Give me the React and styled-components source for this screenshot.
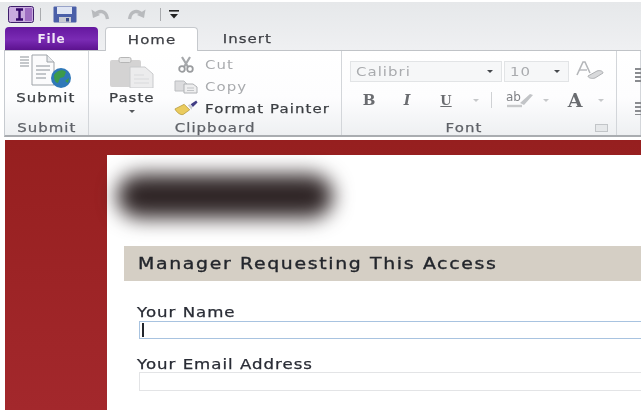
import React from "react";
import styled, { createGlobalStyle } from "styled-components";

const Global = createGlobalStyle`
  html, body { margin: 0; padding: 0; background: #fff; }
  body { font-family: "DejaVu Sans", sans-serif; }
`;

const Page = styled.div`
  width: 641px; height: 410px; overflow: hidden; display: flex; flex-direction: column;
  background: #fff; filter: blur(0.5px);
`;
const Wide = styled.span`
  display: inline-block; white-space: nowrap; transform: scaleX(${p => p.$x || 1.15});
  transform-origin: ${p => p.$left ? "left" : "center"}; -webkit-text-stroke: ${p => p.$stroke ?? 0.25}px currentColor;
`;
const TopBand = styled.div`
  margin-top: 2px; height: 48px; flex: none; display: flex; flex-direction: column;
  background: linear-gradient(#e6e8ea, #eff0f2);
`;
const QuickBar = styled.div`
  height: 25px; display: flex; align-items: center; padding-left: 7px; flex: none;
`;
const QuickSlot = styled.div`
  display: flex; align-items: center; justify-content: center; flex: none;
  width: ${p => p.$w}px; margin-right: ${p => p.$mr || 0}px;
`;
const QuickSep = styled.div`
  width: 1px; height: 13px; background: #a9abae; flex: none; margin-right: ${p => p.$mr}px;
`;
const TabRow = styled.div`
  height: 23px; display: flex; align-items: flex-end; padding-left: 5px; flex: none;
`;
const FileTab = styled.div`
  width: 93px; height: 23px; margin-right: 7px; border-radius: 4px 4px 0 0; box-sizing: border-box;
  background: linear-gradient(#65189f, #7a2bb4 55%, #5c128f);
  color: #f1e7f7; font-size: 12px; font-weight: 700; letter-spacing: 0.8px;
  display: flex; align-items: center; justify-content: center;
`;
const Tab = styled.div`
  width: ${p => p.$w}px; height: ${p => (p.$active ? 24 : 23)}px; box-sizing: border-box;
  color: #3d3f44; font-size: 13px; letter-spacing: 0.9px;
  display: flex; align-items: center; justify-content: center; margin-right: ${p => p.$mr || 0}px;
  ${p => p.$active ? `
    background: #fff; border: 1px solid #c6c9cd; border-bottom: none; border-radius: 4px 4px 0 0; margin-bottom: -1px; z-index: 1;
  ` : ""}
`;
const Ribbon = styled.div`
  height: 87px; flex: none; margin-left: 4px; display: flex; box-sizing: border-box;
  border-top: 1px solid #c0c3c7; border-left: 1px solid #c7cbd0; border-bottom: 2px solid #a9acb0;
  background: linear-gradient(#fff, #fdfdfe 55%, #eef0f2);
`;
const Group = styled.div`
  width: ${p => p.$w}px; flex: none; display: flex; flex-direction: column; box-sizing: border-box;
  border-right: 1px solid #d3d6da;
`;
const GroupBody = styled.div`
  height: 68px; flex: none; display: flex;
`;
const GroupLabel = styled.div`
  flex: 1; display: flex; align-items: center; justify-content: center; font-size: 13px; letter-spacing: 0.9px;
  color: #5e6167; position: relative; padding-right: ${p => p.$pr || 0}px;
`;
const BigButton = styled.div`
  width: ${p => p.$w}px; margin-left: ${p => p.$ml || 0}px; flex: none; display: flex; flex-direction: column; align-items: center;
  padding-top: ${p => p.$pt}px; font-size: 13px; letter-spacing: 0.9px; color: #3b3e42; box-sizing: border-box;
`;
const BigLabel = styled.div`margin-top: ${p => p.$mt}px; line-height: 14px;`;
const Caret = styled.div`
  width: 0; height: 0; border-left: 3.5px solid transparent; border-right: 3.5px solid transparent;
  border-top: 3px solid ${p => p.$c || "#55585c"}; flex: none; margin: ${p => p.$m || 0};
`;
const SmallColumn = styled.div`
  display: flex; flex-direction: column; margin-left: 17px; padding-top: 3px;
`;
const SmallButton = styled.div`
  height: 22px; display: flex; align-items: center; gap: 7px; font-size: 13px; letter-spacing: 0.95px;
  color: ${p => (p.$off ? "#a9abae" : "#3b3e42")};
`;
const IconBox = styled.div`width: 24px; display: flex; justify-content: center; flex: none;`;
const FontColumn = styled.div`
  display: flex; flex-direction: column; padding: 9px 0 0 8px;
`;
const FontRow = styled.div`display: flex; align-items: center; height: ${p => p.$h}px;`;
const Combo = styled.div`
  width: ${p => p.$w}px; height: 21px; box-sizing: border-box; border: 1px solid #e2e4e6; background: #f6f7f8;
  display: flex; align-items: center; justify-content: space-between; padding: 0 8px 0 5px; font-size: 13px; letter-spacing: 0.9px;
  color: #a9abae; margin-right: ${p => p.$mr || 0}px;
`;
const FontGlyph = styled.div`
  width: ${p => p.$w}px; flex: none; text-align: center; color: ${p => p.$c || "#6a6c70"};
  font-family: ${p => p.$serif ? '"DejaVu Serif", serif' : '"DejaVu Sans", sans-serif'};
  font-size: ${p => p.$s || 14}px; font-weight: ${p => p.$b ? 700 : 400}; font-style: ${p => p.$i ? "italic" : "normal"};
  text-decoration: ${p => p.$u ? "underline" : "none"};
`;
const RowSep = styled.div`width: 1px; height: 16px; background: #cfd1d4; flex: none; margin: 0 14px 0 12px;`;
const Launcher = styled.div`
  position: absolute; right: 8px; top: 5px; width: 11px; height: 6px; border: 1px solid #c2c5c8; background: #e6e8ea;
`;
const EdgeIcons = styled.div`
  display: flex; flex-direction: column; gap: 20px; padding: 17px 0 0 18px;
`;
const Lines = styled.div`
  width: 7px; height: ${p => p.$h}px; flex: none;
  background: repeating-linear-gradient(#8a8c90 0 2px, transparent 2px 4px);
`;
const Workspace = styled.div`
  flex: 1; margin: 3px 0 0 5px; padding: 15px 0 0 102px; background: linear-gradient(#961f1f, #a3282c); display: flex; min-height: 0;
`;
const Sheet = styled.div`
  flex: 1; background: #fff; display: flex; flex-direction: column; padding-left: 17px;
`;
const Blob = styled.div`
  width: 216px; height: 44px; margin: 19px 0 28px -7px; border-radius: 22px; background: #2f2526; filter: blur(10px); flex: none;
`;
const SectionHead = styled.div`
  height: 35px; flex: none; background: #d5cfc5; display: flex; align-items: center; padding-left: 14px;
  font-size: 16px; letter-spacing: 1.4px; color: #23262c; margin-bottom: 23px;
`;
const FieldLabel = styled.label`
  display: block; font-size: 13.5px; letter-spacing: 0.8px; color: #2a2d36; line-height: 16px; margin-left: 13px;
`;
const Field = styled.div`
  height: ${p => p.$h}px; margin: ${p => p.$mt}px 0 ${p => p.$mb || 0}px 15px; box-sizing: border-box; background: #fff;
  border: 1px solid ${p => (p.$focus ? "#a8c3e0" : "#e3e4e6")}; border-right: none; display: flex; align-items: center; padding-left: 2px;
`;
const TextCaret = styled.div`width: 2px; height: 14px; background: #23262c;`;

const Logo = () => (
  <svg width="26" height="17" viewBox="0 0 26 17">
    <rect x="0.5" y="0.5" width="25" height="16" rx="2" fill="#c9acdf" stroke="#3f1f6c" />
    <rect x="17" y="2" width="7" height="13" fill="#9f6fc2" />
    <path d="M8 3.5h7M8 13.5h7M11.5 3.5v10" stroke="#35096a" strokeWidth="2.4" fill="none" />
  </svg>
);
const Save = () => (
  <svg width="24" height="17" viewBox="0 0 24 17">
    <rect x="0.5" y="0.5" width="23" height="16" rx="1" fill="#4a5fa8" />
    <rect x="4" y="1" width="15" height="7" fill="#dfe5f3" />
    <rect x="6" y="11" width="12" height="5.5" fill="#c6cad2" />
    <rect x="13" y="12" width="3" height="3.5" fill="#3b4b88" />
  </svg>
);
const Undo = ({ flip }) => (
  <svg width="19" height="13" viewBox="0 0 19 13" style={flip ? { transform: "scaleX(-1)" } : undefined}>
    <path d="M4 6.5C8 2 15 2 16.5 11" stroke="#b8babd" strokeWidth="3.4" fill="none" />
    <path d="M0.5 1.5L2 10l7-3z" fill="#b8babd" />
  </svg>
);
const Customize = () => (
  <svg width="10" height="9" viewBox="0 0 10 9">
    <rect x="0" y="0" width="10" height="1.6" fill="#222" />
    <path d="M1 4h8L5 8.5z" fill="#222" />
  </svg>
);
const SubmitIcon = () => (
  <svg width="56" height="34" viewBox="0 0 56 34">
    <path d="M14 1h15l7 7v23H14z" fill="#fbfbfc" stroke="#9ea3a8" />
    <path d="M29 1v7h7" fill="#e7e9ec" stroke="#9ea3a8" />
    <path d="M2 3h9M2 6h9M2 9h9M2 12h9M18 12h14M18 16h14M18 20h10M18 24h10" stroke="#8c9198" strokeWidth="1.2" />
    <circle cx="43" cy="24" r="10" fill="#2f78b8" />
    <path d="M36 21c3-5 9-6 12-3l-2 5-4 1-2 5c-3 0-4-4-4-8zM47 27l4-3-1 5z" fill="#3c9a4a" />
  </svg>
);
const PasteIcon = () => (
  <svg width="46" height="31" viewBox="0 0 46 31">
    <rect x="1" y="3" width="31" height="27" rx="2" fill="#d4d3d3" />
    <rect x="10" y="0.5" width="12" height="5" rx="1.5" fill="#e6e6e6" stroke="#b6b6b6" />
    <path d="M21 10h15l8 7v14H21z" fill="#ececed" stroke="#c9cacc" />
    <path d="M25 18h10M25 22h15M25 26h15" stroke="#d9dadc" />
  </svg>
);
const CutIcon = () => (
  <svg width="18" height="17" viewBox="0 0 18 17">
    <path d="M5 1l6 10M13 1L7 11" stroke="#a6a8ab" strokeWidth="2.2" />
    <circle cx="5" cy="13" r="2.8" fill="none" stroke="#9a9c9f" strokeWidth="1.8" />
    <circle cx="13" cy="13" r="2.8" fill="none" stroke="#9a9c9f" strokeWidth="1.8" />
  </svg>
);
const CopyIcon = () => (
  <svg width="24" height="14" viewBox="0 0 24 14">
    <path d="M1 1h9l3 3v7H1z" fill="#dcdcde" stroke="#bcbec1" />
    <path d="M10 4h9l4 3v6H10z" fill="#eeeeef" stroke="#b0b2b5" />
    <path d="M13 8h7M13 10.5h7" stroke="#c2c4c7" />
  </svg>
);
const BrushIcon = () => (
  <svg width="26" height="16" viewBox="0 0 26 16">
    <path d="M1 9l10-5 6 6-7 5C7 16 3 13 1 9z" fill="#eacb5e" stroke="#a98c2c" strokeWidth="0.7" />
    <path d="M15 5l2-1 3 3-1 3z" fill="#c9ccd2" />
    <path d="M18 4l6-4 1.5 2-5 5z" fill="#413c84" />
  </svg>
);
const EraserA = () => (
  <svg width="28" height="20" viewBox="0 0 28 20">
    <path d="M1 14L7 1h2l5 11" fill="none" stroke="#b5b7ba" strokeWidth="1.6" />
    <path d="M3 9h8" stroke="#b5b7ba" strokeWidth="1.4" />
    <path d="M12 15l9-5c3-1 6 0 6 2l-8 5c-3 1-7 0-7-2z" fill="#d8d9db" stroke="#aeb0b3" />
  </svg>
);
const HighlightIcon = () => (
  <svg width="28" height="18" viewBox="0 0 28 18">
    <text x="0" y="10" fontFamily="DejaVu Sans" fontSize="12" fill="#808286">ab</text>
    <path d="M14 12l10-9 3 1-9 10z" fill="#c2c4c7" />
    <path d="M1 15h15" stroke="#c8c9cb" strokeWidth="2.4" />
  </svg>
);

export default function App() {
  return (
    <Page>
      <Global />
      <TopBand>
        <QuickBar>
          <QuickSlot $w={27} $mr={6}><Logo /></QuickSlot>
          <QuickSep $mr={12} />
          <QuickSlot $w={24} $mr={14}><Save /></QuickSlot>
          <QuickSlot $w={19} $mr={17}><Undo /></QuickSlot>
          <QuickSlot $w={19} $mr={14}><Undo flip /></QuickSlot>
          <QuickSep $mr={8} />
          <QuickSlot $w={10}><Customize /></QuickSlot>
        </QuickBar>
        <TabRow>
          <FileTab>File</FileTab>
          <Tab $active $w={93} $mr={5}><Wide>Home</Wide></Tab>
          <Tab $w={88}><Wide>Insert</Wide></Tab>
        </TabRow>
      </TopBand>
      <Ribbon>
        <Group $w={84}>
          <GroupBody>
            <BigButton $w={82} $pt={3}>
              <SubmitIcon />
              <BigLabel $mt={3}><Wide>Submit</Wide></BigLabel>
            </BigButton>
          </GroupBody>
          <GroupLabel><Wide>Submit</Wide></GroupLabel>
        </Group>
        <Group $w={253}>
          <GroupBody>
            <BigButton $w={50} $ml={18} $pt={6}>
              <PasteIcon />
              <BigLabel $mt={3}><Wide>Paste</Wide></BigLabel>
              <Caret $m="5px 0 0" />
            </BigButton>
            <SmallColumn>
              <SmallButton $off><IconBox><CutIcon /></IconBox><Wide $left $stroke={0}>Cut</Wide></SmallButton>
              <SmallButton $off><IconBox><CopyIcon /></IconBox><Wide $left $stroke={0}>Copy</Wide></SmallButton>
              <SmallButton><IconBox><BrushIcon /></IconBox><Wide $left>Format Painter</Wide></SmallButton>
            </SmallColumn>
          </GroupBody>
          <GroupLabel><Wide>Clipboard</Wide></GroupLabel>
        </Group>
        <Group $w={275}>
          <GroupBody>
            <FontColumn>
              <FontRow $h={22}>
                <Combo $w={152} $mr={2}><Wide $left $stroke={0}>Calibri</Wide><Caret $c="#45484c" /></Combo>
                <Combo $w={65} $mr={7}><Wide $left $stroke={0}>10</Wide><Caret $c="#45484c" /></Combo>
                <EraserA />
              </FontRow>
              <FontRow $h={36}>
                <FontGlyph $w={38} $serif $b $s={15}>B</FontGlyph>
                <FontGlyph $w={38} $serif $i $b $s={14}>I</FontGlyph>
                <FontGlyph $w={40} $serif $u $b $s={13}>U</FontGlyph>
                <Caret $c="#c6c8ca" $m="0 0 0 7px" />
                <RowSep />
                <HighlightIcon />
                <Caret $c="#c6c8ca" $m="0 3px 0 9px" />
                <FontGlyph $w={46} $serif $b $s={19}>A</FontGlyph>
                <Caret $c="#c6c8ca" />
              </FontRow>
            </FontColumn>
          </GroupBody>
          <GroupLabel $pr={30}><Wide>Font</Wide><Launcher /></GroupLabel>
        </Group>
        <Group $w={24}>
          <EdgeIcons>
            <Lines $h={14} />
            <Lines $h={13} />
          </EdgeIcons>
        </Group>
      </Ribbon>
      <Workspace>
        <Sheet>
          <Blob />
          <SectionHead><Wide $left $x={1.18} $stroke={0.35}>Manager Requesting This Access</Wide></SectionHead>
          <FieldLabel><Wide $left $x={1.23}>Your Name</Wide></FieldLabel>
          <Field $h={18} $mt={1} $focus $mb={17}><TextCaret /></Field>
          <FieldLabel><Wide $left $x={1.23}>Your Email Address</Wide></FieldLabel>
          <Field $h={19} $mt={0} />
        </Sheet>
      </Workspace>
    </Page>
  );
}
